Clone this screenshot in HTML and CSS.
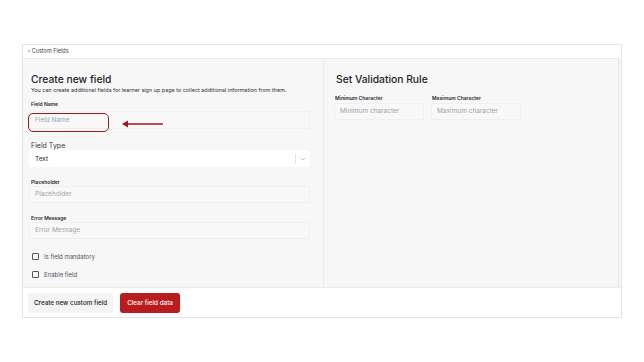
FILE: index.html
```html
<!DOCTYPE html>
<html lang="en">
<head>
    <meta charset="UTF-8">
    <title>Custom Fields</title>
    <link rel="stylesheet" href="styles.css">
</head>
<body>
    <div class="card">
        <div class="topbar">&#8249; Custom Fields</div>
        <div class="panels">
            <div class="panel left">
                <h1 class="title">Create new field</h1>
                <p class="subtitle">You can create additional fields for learner sign up page to collect additional information from them.</p>

                <label class="label small">Field Name</label>
                <div class="field-wrap">
                    <div class="input tall">Field Name</div>
                    <div class="highlight"></div>
                    <svg class="arrow" width="44" height="8" viewBox="0 0 44 8">
                        <path d="M5 4H42" stroke="#a3161d" stroke-width="1.6"/>
                        <path d="M1 4L7 0.6V7.4Z" fill="#a3161d"/>
                    </svg>
                </div>

                <label class="label big">Field Type</label>
                <div class="select">
                    <span>Text</span>
                    <span class="select-end">
                        <span class="sep"></span>
                        <svg width="6" height="4" viewBox="0 0 6 4"><path d="M1 1l2 2 2-2" fill="none" stroke="#b5b5bb" stroke-width="0.8"/></svg>
                    </span>
                </div>

                <label class="label small gap">Placeholder</label>
                <div class="input">Placeholder</div>

                <label class="label small gap">Error Message</label>
                <div class="input">Error Message</div>

                <div class="check first"><span class="box"></span>Is field mandatory</div>
                <div class="check"><span class="box"></span>Enable field</div>
            </div>
            <div class="panel right">
                <h1 class="title">Set Validation Rule</h1>
                <div class="rule-row">
                    <div class="rule">
                        <label class="label small">Minimum Character</label>
                        <div class="input">Minimum character</div>
                    </div>
                    <div class="rule">
                        <label class="label small">Maximum Character</label>
                        <div class="input">Maximum character</div>
                    </div>
                </div>
            </div>
        </div>
        <div class="footer">
            <button class="btn">Create new custom field</button>
            <button class="btn danger">Clear field data</button>
        </div>
    </div>
</body>
</html>
```

FILE: styles.css
```css
* {
    margin: 0;
    padding: 0;
    box-sizing: border-box;
}

body {
    font-family: Inter, "Noto Sans", sans-serif;
    background-color: #ffffff;
    color: #1f1f24;
    padding: 44px 0 0 22px;
}

.card {
    width: 600px;
    height: 274px;
    border: 1px solid #e4e4e7;
    display: flex;
    flex-direction: column;
    background-color: #ffffff;
}

.topbar {
    height: 14px;
    font-size: 5.5px;
    line-height: 13px;
    padding-left: 5px;
    color: #3f3f46;
    border-bottom: 1px solid #ececee;
}

.panels {
    display: flex;
    height: 228px;
    background-color: #f7f7f8;
}

.panel {
    padding-top: 13px;
}

.left {
    width: 301px;
    padding-left: 6px;
    padding-right: 13px;
    border-right: 1px solid #ececee;
}

.right {
    flex: 1;
    padding-left: 10px;
    margin-right: 2px;
    border-right: 1px solid #e4e4e7;
}

.title {
    font-size: 10.3px;
    font-weight: 500;
    line-height: 14px;
    color: #222228;
    margin-left: 2px;
}

.subtitle {
    font-size: 5.45px;
    line-height: 7px;
    color: #2f2f35;
    margin-left: 2px;
    margin-top: 1px;
}

.label {
    display: block;
    color: #27272a;
    margin-left: 2px;
}

.label.small {
    font-size: 5px;
    font-weight: 600;
    line-height: 7px;
    margin-top: 7px;
}

.label.gap {
    margin-top: 12px;
}

.label.big {
    font-size: 7px;
    line-height: 9px;
    margin-top: 12px;
    color: #3a3a40;
}

.input {
    height: 17px;
    border: 1px solid #efeff1;
    background-color: #f8f8f9;
    border-radius: 2px;
    font-size: 6.5px;
    line-height: 15px;
    padding-left: 5px;
    color: #a1a1aa;
}

.input.tall {
    height: 18px;
    line-height: 16px;
    margin-top: 3px;
}

.field-wrap {
    position: relative;
}

.highlight {
    position: absolute;
    left: -1px;
    top: 2px;
    width: 81px;
    height: 19px;
    border: 1.3px solid #a3161d;
    border-radius: 5px;
}

.arrow {
    position: absolute;
    left: 92px;
    top: 9px;
}

.select {
    height: 17px;
    background-color: #ffffff;
    border-radius: 2px;
    display: flex;
    align-items: center;
    justify-content: space-between;
    padding-left: 6px;
    padding-right: 4px;
    font-size: 6.5px;
    color: #27272a;
}

.select-end {
    display: flex;
    align-items: center;
    gap: 4px;
}

.sep {
    width: 1px;
    height: 10px;
    background-color: #e4e4e7;
}

.check {
    display: flex;
    align-items: center;
    gap: 5px;
    font-size: 6px;
    color: #52525b;
    height: 8px;
    margin-left: 3px;
    margin-top: 10px;
}

.check.first {
    margin-top: 13px;
}

.box {
    width: 7px;
    height: 7px;
    border: 1px solid #52525b;
    border-radius: 1px;
}

.rule-row {
    display: flex;
    gap: 7px;
    margin-top: 9px;
}

.rule {
    width: 90px;
}

.rule .label {
    margin-left: 1px;
    margin-top: 0;
}

.rule .input {
    margin-top: 1px;
}

.footer {
    flex: 1;
    border-top: 1px solid #ececee;
    display: flex;
    align-items: center;
    gap: 7px;
    padding-left: 5px;
}

.btn {
    height: 20px;
    border: none;
    border-radius: 2px;
    font-family: Inter, "Noto Sans", sans-serif;
    font-size: 6.3px;
    font-weight: 500;
    padding: 0 6px;
    background-color: #f4f4f5;
    color: #18181b;
}

.btn.danger {
    background-color: #b91c1c;
    color: #ffffff;
    padding: 0 7px;
    border-radius: 3px;
}
```
